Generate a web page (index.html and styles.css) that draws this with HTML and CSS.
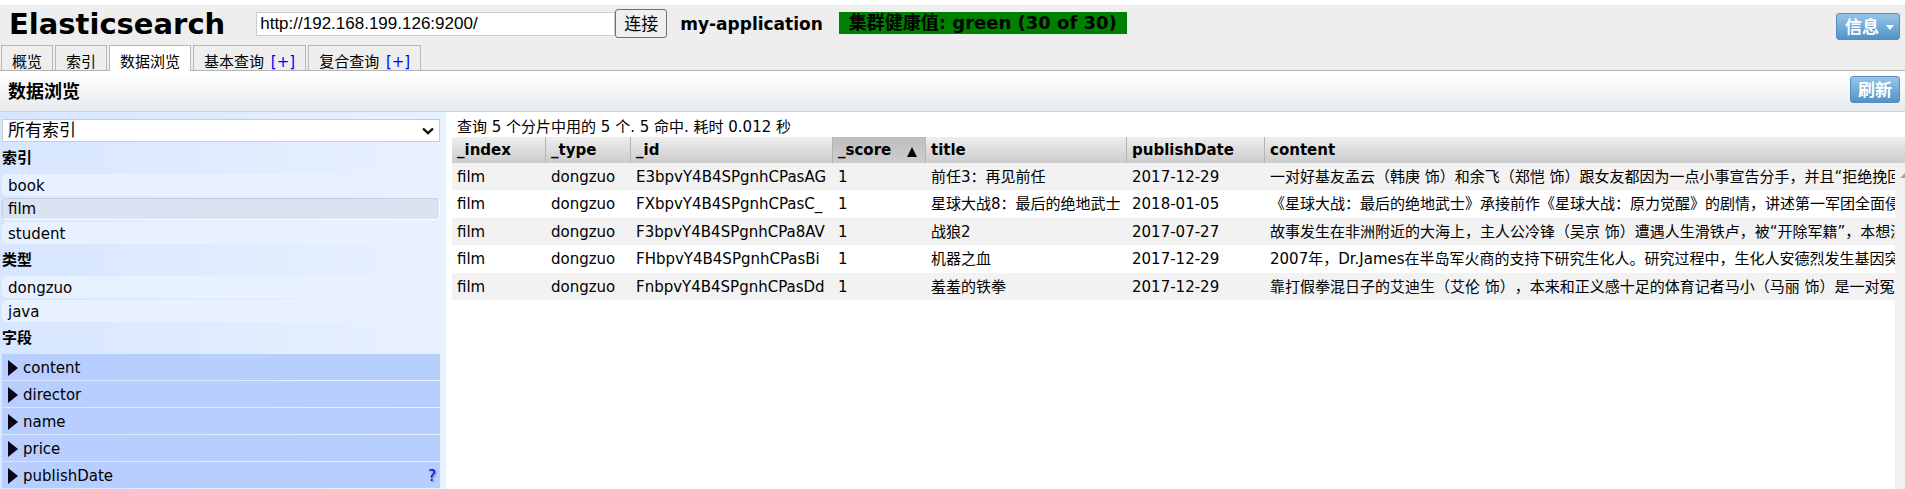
FILE: index.html
```html
<!DOCTYPE html>
<html lang="zh-CN">
<head>
<meta charset="utf-8">
<title>Elasticsearch</title>
<link rel="stylesheet" href="styles.css">
</head>
<body>
<header class="header">
  <div class="topbar">
    <h1 class="brand">Elasticsearch</h1>
    <form class="connect">
      <input class="connect-url" type="text" aria-label="URL" value="http://192.168.199.126:9200/">
      <button class="connect-btn" type="button">连接</button>
    </form>
    <span class="cluster">my-application</span>
    <span class="health">集群健康值: green (30 of 30)</span>
    <button class="action info" type="button">信息 <span class="caret"></span></button>
  </div>
  <nav class="tabs">
    <a class="tab" href="#overview">概览</a>
    <a class="tab" href="#indices">索引</a>
    <a class="tab active" href="#browser">数据浏览</a>
    <span class="tab"><a href="#query">基本查询</a> <a class="add" href="#query-new">[+]</a></span>
    <span class="tab"><a href="#compound">复合查询</a> <a class="add" href="#compound-new">[+]</a></span>
  </nav>
</header>
<div class="section-bar">
  <h2 class="section-title">数据浏览</h2>
  <button class="action" type="button">刷新</button>
</div>
<main class="browser">
  <aside class="filters">
    <div class="select-wrap">
      <select class="index-select" aria-label="索引"><option>所有索引</option></select>
      <svg class="chevron" viewBox="0 0 12 8" aria-hidden="true"><path d="M1 1.5 6 6.2 11 1.5" fill="none" stroke="#111" stroke-width="2.4"/></svg>
    </div>
    <h3 class="group-title">索引</h3>
    <div class="group">
      <button class="item" type="button">book</button>
      <button class="item selected" type="button">film</button>
      <button class="item" type="button">student</button>
    </div>
    <h3 class="group-title">类型</h3>
    <div class="group">
      <button class="item" type="button">dongzuo</button>
      <button class="item" type="button">java</button>
    </div>
    <h3 class="group-title">字段</h3>
    <div class="fields">
      <button class="field" type="button"><span class="arrow"></span>content</button>
      <button class="field" type="button"><span class="arrow"></span>director</button>
      <button class="field" type="button"><span class="arrow"></span>name</button>
      <button class="field" type="button"><span class="arrow"></span>price</button>
      <button class="field" type="button"><span class="arrow"></span>publishDate<span class="help">?</span></button>
    </div>
  </aside>
  <section class="results">
    <p class="summary">查询 5 个分片中用的 5 个. 5 命中. 耗时 0.012 秒</p>
    <div class="table-area">
      <table class="table">
        <colgroup><col class="c-index"><col class="c-type"><col class="c-id"><col class="c-score"><col class="c-title"><col class="c-date"><col></colgroup>
        <thead>
          <tr><th>_index</th><th>_type</th><th>_id</th><th class="sorted"><span class="sort-head">_score <span class="sort-mark"></span></span></th><th>title</th><th>publishDate</th><th>content</th></tr>
        </thead>
        <tbody>
          <tr><td>film</td><td>dongzuo</td><td>E3bpvY4B4SPgnhCPasAG</td><td>1</td><td>前任3：再见前任</td><td>2017-12-29</td><td>一对好基友孟云（韩庚 饰）和余飞（郑恺 饰）跟女友都因为一点小事宣告分手，并且“拒绝挽回</td></tr>
          <tr><td>film</td><td>dongzuo</td><td>FXbpvY4B4SPgnhCPasC_</td><td>1</td><td>星球大战8：最后的绝地武士</td><td>2018-01-05</td><td>《星球大战：最后的绝地武士》承接前作《星球大战：原力觉醒》的剧情，讲述第一军团全面侵</td></tr>
          <tr><td>film</td><td>dongzuo</td><td>F3bpvY4B4SPgnhCPa8AV</td><td>1</td><td>战狼2</td><td>2017-07-27</td><td>故事发生在非洲附近的大海上，主人公冷锋（吴京 饰）遭遇人生滑铁卢，被“开除军籍”，本想漂</td></tr>
          <tr><td>film</td><td>dongzuo</td><td>FHbpvY4B4SPgnhCPasBi</td><td>1</td><td>机器之血</td><td>2017-12-29</td><td>2007年，Dr.James在半岛军火商的支持下研究生化人。研究过程中，生化人安德烈发生基因突</td></tr>
          <tr><td>film</td><td>dongzuo</td><td>FnbpvY4B4SPgnhCPasDd</td><td>1</td><td>羞羞的铁拳</td><td>2017-12-29</td><td>靠打假拳混日子的艾迪生（艾伦 饰），本来和正义感十足的体育记者马小（马丽 饰）是一对冤</td></tr>
        </tbody>
      </table>
      <div class="scrollbar"><svg class="scroll-up" viewBox="0 0 10 5" aria-hidden="true"><path d="M0 5 5 0 10 5Z" fill="#a3a3a3"/></svg></div>
    </div>
  </section>
</main>
</body>
</html>
```
FILE: styles.css
```css
* { box-sizing: border-box; }

body {
  margin: 0;
  min-height: 100vh;
  display: flex;
  flex-direction: column;
  overflow: hidden;
  background: #fff;
  color: #000;
  font: 15px/20px "DejaVu Sans", "Noto Sans CJK SC", sans-serif;
  text-spacing-trim: space-all;
}

button, input, select { font: inherit; color: inherit; margin: 0; }
a { color: inherit; text-decoration: none; }
h1, h2, h3, p { margin: 0; }

.header {
  margin-top: 5px;
  background: #eee;
  border-bottom: 1px solid #b4b4b4;
}

.topbar {
  display: flex;
  align-items: flex-start;
  height: 40px;
  padding: 4px 5px 0 9px;
}

.brand { font-size: 29px; line-height: 30px; margin-right: 31px; }

.connect { display: flex; align-items: center; }

.connect-url {
  width: 359px;
  height: 24px;
  padding: 0 3px;
  border: 1px solid #ccc;
  background: #fff;
  font: 17px "Liberation Sans", Arial, sans-serif;
}

.connect-btn {
  height: 29px;
  padding: 0 8px;
  border: 1px solid #6f6f6f;
  border-radius: 3px;
  background: #efefef;
  font-size: 17px;
  line-height: 24px;
}

.cluster, .health {
  font-size: 17px;
  font-weight: bold;
  line-height: 22px;
  white-space: nowrap;
}
.cluster { margin: 4px 16px 0 13px; }
.health { margin-top: 3px; padding: 0 10px; background: #008000; font-size: 18px; }

.action {
  height: 27px;
  padding: 1px 7px 0;
  border: 1px solid #5b8ac4;
  border-radius: 3px;
  background: linear-gradient(#96c6e8, #5193c6);
  color: #fff;
  font-size: 17px;
  font-weight: bold;
  line-height: 24px;
  white-space: nowrap;
}
.info { margin: 4px 0 0 auto; padding: 1px 5px 0 8px; }

.caret {
  display: inline-block;
  margin-left: 1px;
  border: 4px solid transparent;
  border-top: 5px solid #fff;
  border-bottom: 0;
  vertical-align: 3px;
}

.tabs { display: flex; gap: 2px; padding-left: 1px; }

.tab {
  height: 25px;
  padding: 6px 10px 0;
  overflow: hidden;
  border: 1px solid #b8b8b8;
  border-bottom: 0;
  white-space: nowrap;
}
.tab.active { height: 26px; margin-bottom: -1px; background: #fff; }
.add { color: #00f; margin-left: 2px; }

.section-bar {
  display: flex;
  align-items: center;
  justify-content: space-between;
  height: 41px;
  padding: 0 5px 0 8px;
  border-bottom: 1px solid #ccd2d6;
  background: linear-gradient(#fff, #e7ebee);
}
.section-bar .action { margin-bottom: 3px; }
.section-title { padding-top: 2px; font-size: 18px; line-height: 24px; }

.browser { flex: 1; display: flex; }

.filters {
  flex: none;
  width: 446px;
  padding: 7px 6px 0 2px;
  background: linear-gradient(90deg, #d7e6ff, #e8f1ff);
}

.select-wrap { position: relative; }
.index-select {
  display: block;
  appearance: none;
  width: 100%;
  height: 23px;
  padding: 0 5px;
  border: 1px solid #ccc;
  border-radius: 0;
  background: #fff;
  font-size: 17px;
  line-height: 21px;
}
.chevron { position: absolute; right: 6px; top: 8px; width: 12px; height: 8px; }

.group-title { font-size: 15px; line-height: 32px; }

.group { display: flex; flex-direction: column; gap: 2px; }

.item {
  height: 22px;
  padding: 2px 6px 0;
  border: 0;
  border-radius: 5px;
  background: #e8f1ff;
  text-align: left;
  line-height: 20px;
}
.item.selected {
  border: 1px solid #c3cfdf;
  border-right-color: #fff;
  border-bottom-color: #fff;
  padding: 0 5px;
  background: #dae3ef;
}

.fields { display: flex; flex-direction: column; gap: 1px; }

.field {
  display: flex;
  align-items: center;
  height: 26px;
  padding: 1px 4px 0 6px;
  border: 0;
  background: #b8ceff;
  text-align: left;
}
.arrow {
  margin-right: 5px;
  border: 8px solid transparent;
  border-left: 10px solid #0a0518;
  border-right: 0;
}
.help { margin-left: auto; color: #00f; text-shadow: 1px 1px 2px #667; }

.results { flex: 1; min-width: 0; display: flex; flex-direction: column; padding-left: 6px; }
.summary { padding: 5px 5px 0; }
.table-area { position: relative; flex: 1; }

.table {
  width: 100%;
  table-layout: fixed;
  border-collapse: separate;
  border-spacing: 0;
}
.c-index { width: 94px; }
.c-type { width: 85px; }
.c-id { width: 202px; }
.c-score { width: 93px; }
.c-title { width: 201px; }
.c-date { width: 138px; }

.table th, .table td {
  padding: 0 5px;
  overflow: hidden;
  white-space: nowrap;
  text-align: left;
}
.table th {
  height: 26px;
  border-right: 1px solid #b4b4b4;
  background: linear-gradient(#eee, #ccc);
}
.table th:last-child { border-right: 0; }
.table th.sorted { background: linear-gradient(#bebebe, #ccc); }
.sort-head { display: flex; align-items: center; justify-content: space-between; }
.sort-mark {
  border: 5px solid transparent;
  border-bottom: 10px solid #000;
  border-top: 0;
  margin: 3px 3px 0 0;
}
.table td { height: 27px; }
.table tbody tr:nth-child(odd) { background: #f2f2f2; }
.table tbody tr:nth-child(even) td { height: 28px; }

.scrollbar {
  position: absolute;
  top: 26px;
  right: 0;
  bottom: 0;
  width: 10px;
  overflow: hidden;
  background: #f1f1f1;
}
.scroll-up { display: block; width: 10px; height: 5px; margin: 10px 0 0 5px; }
```
